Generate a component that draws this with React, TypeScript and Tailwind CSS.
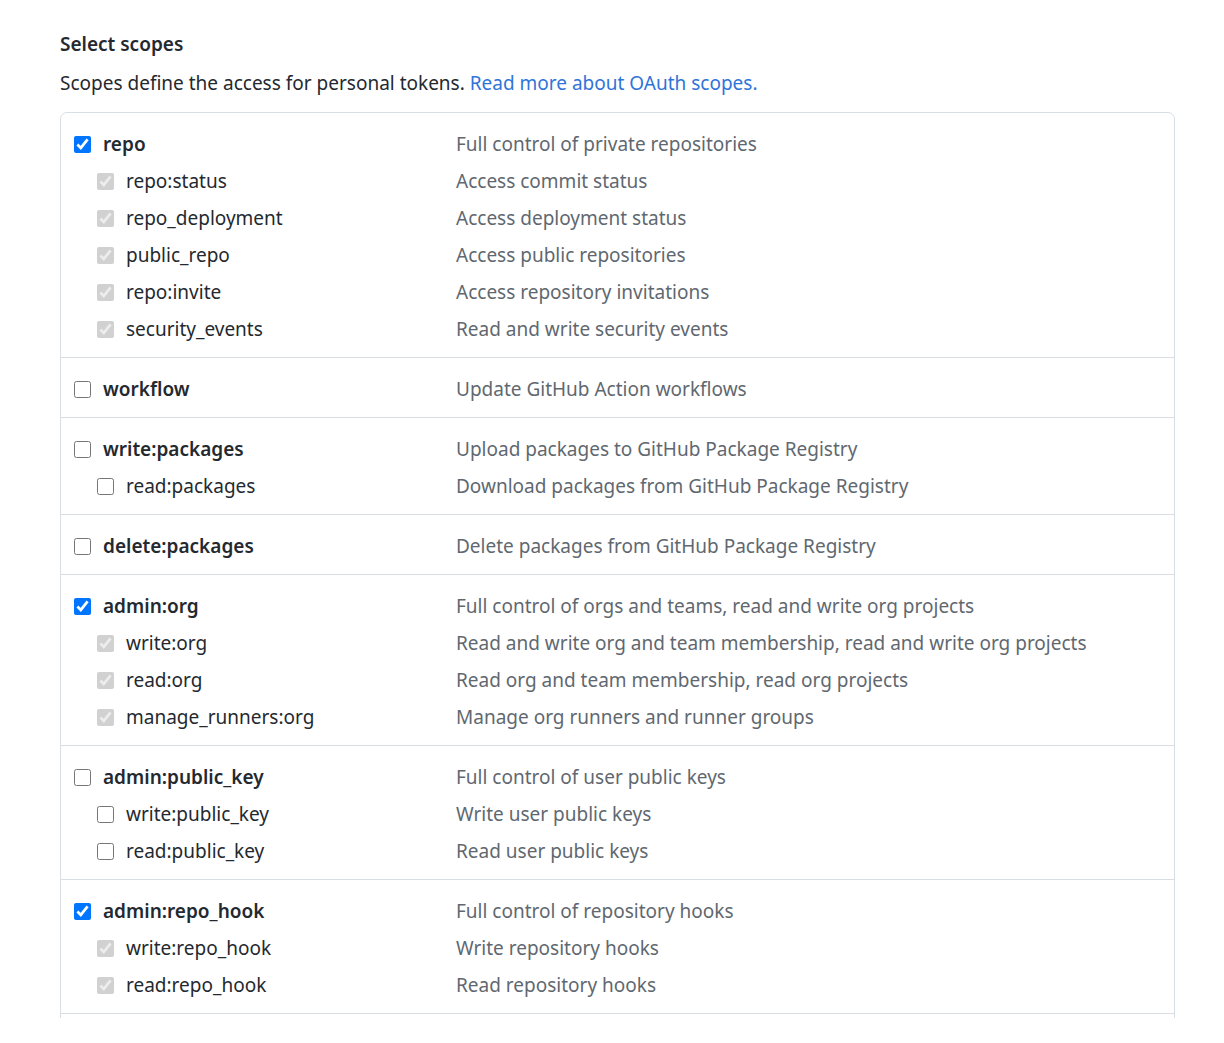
type Scope = { name: string; desc: string };
type Group = { parent: Scope; checked: boolean; children: Scope[] };

const groups: Group[] = [
  {
    parent: { name: "repo", desc: "Full control of private repositories" },
    checked: true,
    children: [
      { name: "repo:status", desc: "Access commit status" },
      { name: "repo_deployment", desc: "Access deployment status" },
      { name: "public_repo", desc: "Access public repositories" },
      { name: "repo:invite", desc: "Access repository invitations" },
      { name: "security_events", desc: "Read and write security events" },
    ],
  },
  {
    parent: { name: "workflow", desc: "Update GitHub Action workflows" },
    checked: false,
    children: [],
  },
  {
    parent: { name: "write:packages", desc: "Upload packages to GitHub Package Registry" },
    checked: false,
    children: [{ name: "read:packages", desc: "Download packages from GitHub Package Registry" }],
  },
  {
    parent: { name: "delete:packages", desc: "Delete packages from GitHub Package Registry" },
    checked: false,
    children: [],
  },
  {
    parent: { name: "admin:org", desc: "Full control of orgs and teams, read and write org projects" },
    checked: true,
    children: [
      { name: "write:org", desc: "Read and write org and team membership, read and write org projects" },
      { name: "read:org", desc: "Read org and team membership, read org projects" },
      { name: "manage_runners:org", desc: "Manage org runners and runner groups" },
    ],
  },
  {
    parent: { name: "admin:public_key", desc: "Full control of user public keys" },
    checked: false,
    children: [
      { name: "write:public_key", desc: "Write user public keys" },
      { name: "read:public_key", desc: "Read user public keys" },
    ],
  },
  {
    parent: { name: "admin:repo_hook", desc: "Full control of repository hooks" },
    checked: true,
    children: [
      { name: "write:repo_hook", desc: "Write repository hooks" },
      { name: "read:repo_hook", desc: "Read repository hooks" },
    ],
  },
];

function ScopeRow({ scope, child, checked }: { scope: Scope; child?: boolean; checked: boolean }) {
  return (
    <div className="flex items-center h-[37px]">
      <label className={`flex items-center w-[395px] shrink-0 gap-[12px] ${child ? "pl-[36px]" : "pl-[13px]"}`}>
        <input
          type="checkbox"
          defaultChecked={checked}
          disabled={child && checked}
          className="w-[17px] h-[17px] shrink-0"
        />
        <span className={child ? "text-[#24292f]" : "font-semibold text-[#24292f]"}>{scope.name}</span>
      </label>
      <span className="text-[#5f6870]">{scope.desc}</span>
    </div>
  );
}

export default function App() {
  return (
    <div className="min-h-screen bg-white px-[60px] pt-[29px] text-[19px] font-['Noto_Sans',sans-serif]">
      <h3 className="font-semibold text-[#24292f] leading-[30px]">Select scopes</h3>
      <p className="mt-[9px] leading-[30px] text-[#24292f]">
        Scopes define the access for personal tokens.{" "}
        <a href="#" className="text-[#2f74d8]">Read more about OAuth scopes.</a>
      </p>
      <div className="mt-[14px] w-[1115px] h-[906px] overflow-hidden">
        <div className="border border-[#d8dee4] rounded-[7px]">
          {groups.map((g, i) => (
            <div key={g.parent.name} className={`pt-[13px] pb-[9px] ${i > 0 ? "border-t border-[#d8dee4]" : ""}`}>
              <ScopeRow scope={g.parent} checked={g.checked} />
              {g.children.map((c) => (
                <ScopeRow key={c.name} scope={c} child checked={g.checked} />
              ))}
            </div>
          ))}
          <div className="h-[40px] border-t border-[#d8dee4]" />
        </div>
      </div>
    </div>
  );
}
